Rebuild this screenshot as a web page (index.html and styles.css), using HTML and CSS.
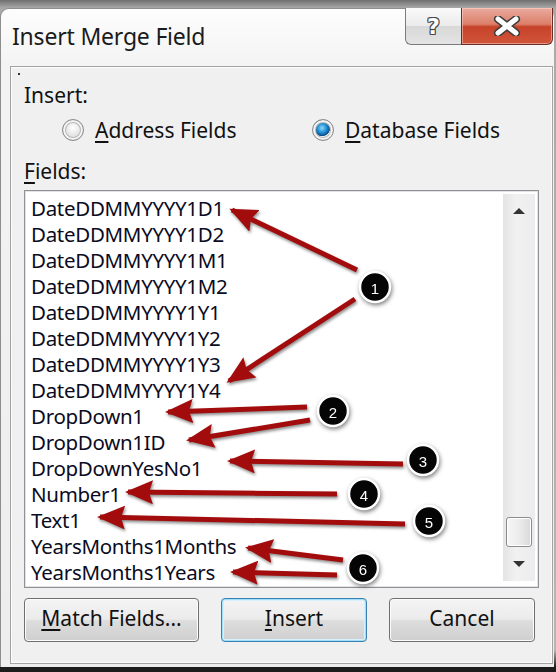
FILE: index.html
```html
<!DOCTYPE html>
<html lang="en">
<head>
    <meta charset="UTF-8">
    <title>Insert Merge Field</title>
    <link rel="stylesheet" href="styles.css">
</head>
<body>
    <div class="screen">
        <div class="window">
            <div class="titlebar">
                <span class="title">Insert Merge Field</span>
                <div class="caption-btns">
                    <div class="cap-btn help"><span>?</span></div>
                    <div class="cap-btn close">
                        <svg width="28" height="20" viewBox="0 0 28 20">
                            <path d="M5 3 L23 17 M23 3 L5 17" stroke="#3c3c3c" stroke-width="8" stroke-linecap="round"/>
                            <path d="M5 3 L23 17 M23 3 L5 17" stroke="#fff" stroke-width="5" stroke-linecap="round"/>
                        </svg>
                    </div>
                </div>
            </div>

            <div class="panel">
                <div class="label">Insert:</div>
                <div class="radios">
                    <div class="radio">
                        <span class="dot"></span>
                        <span><u>A</u>ddress Fields</span>
                    </div>
                    <div class="radio checked">
                        <span class="dot"></span>
                        <span><u>D</u>atabase Fields</span>
                    </div>
                </div>
                <div class="label fields-label"><u>F</u>ields:</div>

                <div class="listbox">
                    <ul class="items">
                        <li>DateDDMMYYYY1D1</li>
                        <li>DateDDMMYYYY1D2</li>
                        <li>DateDDMMYYYY1M1</li>
                        <li>DateDDMMYYYY1M2</li>
                        <li>DateDDMMYYYY1Y1</li>
                        <li>DateDDMMYYYY1Y2</li>
                        <li>DateDDMMYYYY1Y3</li>
                        <li>DateDDMMYYYY1Y4</li>
                        <li>DropDown1</li>
                        <li>DropDown1ID</li>
                        <li>DropDownYesNo1</li>
                        <li>Number1</li>
                        <li>Text1</li>
                        <li>YearsMonths1Months</li>
                        <li>YearsMonths1Years</li>
                    </ul>
                    <div class="scrollbar">
                        <div class="sb-arrow up"></div>
                        <div class="sb-track">
                            <div class="sb-thumb"></div>
                        </div>
                        <div class="sb-arrow down"></div>
                    </div>
                </div>

                <div class="buttons">
                    <div class="btn match"><u>M</u>atch Fields...</div>
                    <div class="btn insert default"><u>I</u>nsert</div>
                    <div class="btn cancel">Cancel</div>
                </div>
            </div>
        </div>

        <!-- callouts drawn on top of the dialog -->
        <svg class="annotations" width="556" height="672" viewBox="0 0 556 672">
            <defs>
                <marker id="head" markerWidth="28" markerHeight="24" refX="25" refY="12" orient="auto" markerUnits="userSpaceOnUse">
                    <path d="M0 0 L28 12 L0 24 L4 12 Z" fill="#a30c0c"/>
                </marker>
            </defs>
            <g class="arrows">
                <line x1="357" y1="270" x2="232" y2="210"/>
                <line x1="355" y1="299" x2="229" y2="381"/>
                <line x1="307" y1="407" x2="168" y2="412"/>
                <line x1="310" y1="420" x2="189" y2="440"/>
                <line x1="403" y1="464" x2="230" y2="461"/>
                <line x1="337" y1="494" x2="128" y2="492"/>
                <line x1="405" y1="524" x2="100" y2="517"/>
                <line x1="343" y1="560" x2="248" y2="548"/>
                <line x1="337" y1="575" x2="233" y2="572"/>
            </g>
            <g class="badges">
                <circle cx="375" cy="287" r="15"/><text x="375" y="288">1</text>
                <circle cx="333" cy="411" r="15"/><text x="333" y="412">2</text>
                <circle cx="423" cy="460" r="15"/><text x="423" y="461">3</text>
                <circle cx="364" cy="494" r="15"/><text x="364" y="495">4</text>
                <circle cx="429" cy="521" r="15"/><text x="429" y="522">5</text>
                <circle cx="363" cy="568" r="15"/><text x="363" y="569">6</text>
            </g>
        </svg>
    </div>
</body>
</html>
```

FILE: styles.css
```css
* {
    margin: 0;
    padding: 0;
    box-sizing: border-box;
}

body {
    font-family: 'Noto Sans', 'Open Sans', sans-serif;
    background: #2a2a2a;
}

.screen {
    position: relative;
    width: 556px;
    height: 672px;
    padding-top: 8px;
    background: linear-gradient(to bottom, #6f6f6f 0, #a9a9a9 8px, #b5b5b5 650px, #1c1c1c 667px);
}

.window {
    width: 554px;
    height: 659px;
    border-radius: 9px 9px 0 0;
    border-top: 1px solid #8e8e8e;
    border-left: 1px solid #8e8e8e;
    background: linear-gradient(to bottom, #fdfdfd 0, #f3f3f3 60px, #ededed 100%);
}

.titlebar {
    display: flex;
    justify-content: space-between;
    height: 56px;
}

.title {
    padding: 11px 0 0 11px;
    font-size: 23px;
    color: #1b1b1b;
    letter-spacing: -0.2px;
}

.caption-btns {
    display: flex;
    height: 37px;
    margin-top: -1px;
    margin-right: 1px;
}

.cap-btn {
    display: flex;
    justify-content: center;
    align-items: center;
    border: 1px solid #7b7b7b;
    border-top: none;
}

.help {
    width: 56px;
    border-radius: 0 0 0 6px;
    border-right: none;
    background: linear-gradient(to bottom, #fafafa 0, #ebebeb 50%, #d8d8d8 51%, #e4e4e4 100%);
}

.help span {
    font-family: 'DejaVu Sans', sans-serif;
    font-weight: bold;
    font-size: 22px;
    color: #fff;
    text-shadow: 1px 0 #4a4a4a, -1px 0 #4a4a4a, 0 1px #4a4a4a, 0 -1px #4a4a4a,
        1px 1px #4a4a4a, -1px -1px #4a4a4a, 1px -1px #4a4a4a, -1px 1px #4a4a4a;
}

.close {
    width: 92px;
    border-color: #6b2c22;
    border-radius: 0 0 6px 0;
    background: linear-gradient(to bottom, #e9ab9d 0, #dc7f6a 45%, #c7432a 52%, #d0553a 100%);
    box-shadow: inset 0 0 0 1px rgba(255, 220, 210, 0.5);
}

.panel {
    position: relative;
    height: 598px;
    margin: 1px 1px 0 9px;
    padding: 15px 13px 0 13px;
    border: 1px solid #a3a3a3;
    background: #f0f0f0;
    box-shadow: inset 0 0 0 1px #fbfbfb;
    font-size: 21px;
    color: #111;
}

.panel::before {
    content: '';
    position: absolute;
    left: 7px;
    top: 6px;
    width: 2px;
    height: 2px;
    background: #333;
}

.label {
    height: 26px;
    line-height: 26px;
}

u {
    text-decoration-thickness: 2px;
    text-underline-offset: 3px;
}

.radios {
    display: grid;
    grid-template-columns: 250px auto;
    margin: 9px 0 0 38px;
    height: 26px;
    line-height: 26px;
}

.radio {
    display: flex;
    align-items: center;
    gap: 11px;
}

.dot {
    width: 22px;
    height: 22px;
    border-radius: 50%;
    border: 1px solid #8a8a8a;
    background: radial-gradient(circle at 50% 40%, #ffffff 0, #e6e6e6 45%, #c9c9c9 100%);
    box-shadow: inset 0 0 0 2px #f4f4f4, inset 0 0 0 3px #b8b8b8;
}

.radio.checked .dot {
    background: radial-gradient(circle at 45% 40%, #8fd8ff 0, #1a8bd0 30%, #0e4f8a 48%, #f2f2f2 52%, #d6d6d6 100%);
}

.fields-label {
    margin-top: 15px;
}

.listbox {
    display: flex;
    height: 398px;
    margin: 6px 0 0 0;
    border: 1px solid #8e9297;
    box-shadow: inset 0 0 0 1px #e3e3e3;
    background: #fff;
}

.items {
    flex: 1;
    list-style: none;
    padding: 4px 0 0 6px;
    font-size: 20.5px;
    letter-spacing: -0.3px;
}

.items li {
    height: 26px;
    line-height: 26px;
    color: #0b0b22;
}

.scrollbar {
    display: flex;
    flex-direction: column;
    width: 32px;
    margin: 3px 3px 6px 0;
    background: linear-gradient(to right, #e4e4e4, #f1f1f1 40%, #ececec);
}

.sb-arrow {
    height: 34px;
    display: flex;
    justify-content: center;
    align-items: center;
}

.sb-arrow::after {
    content: '';
    border-left: 6px solid transparent;
    border-right: 6px solid transparent;
}

.sb-arrow.up::after {
    border-bottom: 6px solid #333;
}

.sb-arrow.down::after {
    border-top: 6px solid #333;
}

.sb-track {
    flex: 1;
    display: flex;
    flex-direction: column;
    justify-content: flex-end;
}

.sb-thumb {
    height: 30px;
    margin: 0 3px;
    border: 1px solid #8c8c8c;
    border-radius: 3px;
    background: linear-gradient(to right, #f6f6f6, #ececec 50%, #d9d9d9);
    box-shadow: inset 0 0 0 1px #fff;
}

.buttons {
    display: flex;
    gap: 22px;
    margin-top: 10px;
    padding-right: 2px;
}

.btn {
    height: 44px;
    display: flex;
    justify-content: center;
    align-items: center;
    padding-bottom: 4px;
    border: 1px solid #707070;
    border-radius: 4px;
    background: linear-gradient(to bottom, #f4f4f4 0, #ebebeb 48%, #dddddd 52%, #cfcfcf 100%);
    box-shadow: inset 0 0 0 1px #fcfcfc;
    font-size: 21px;
    color: #111;
}

.match {
    width: 175px;
}

.insert,
.cancel {
    width: 146px;
}

.btn.default {
    border-color: #3c7fb1;
    box-shadow: inset 0 0 0 1px #9fe0f8, inset 0 0 0 2px #d6f1fb;
}

.annotations {
    position: absolute;
    left: 0;
    top: 0;
    pointer-events: none;
}

.arrows {
    stroke: #a30c0c;
    stroke-width: 5;
    filter: drop-shadow(1px 2px 1.5px rgba(0, 0, 0, 0.45));
}

.arrows line {
    marker-end: url(#head);
}

.badges {
    filter: drop-shadow(1px 2px 2px rgba(0, 0, 0, 0.5));
}

.badges circle {
    fill: #050505;
    stroke: #fff;
    stroke-width: 2.5;
}

.badges text {
    fill: #fff;
    font-family: 'Liberation Sans', sans-serif;
    font-size: 15px;
    text-anchor: middle;
    dominant-baseline: central;
}
```
